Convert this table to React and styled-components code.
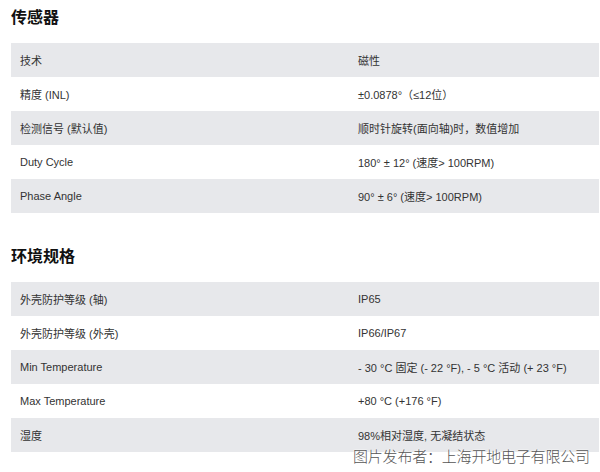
import React from 'react';
import styled, { createGlobalStyle } from 'styled-components';

const Global = createGlobalStyle`
  body {
    margin: 0;
    background: #fff;
    font-family: "Liberation Sans", Arial, "Noto Sans CJK SC", sans-serif;
  }
`;

const Page = styled.div`
  position: relative;
  width: 600px;
  height: 472px;
  overflow: hidden;
  padding: 0 1px 0 11px;
  box-sizing: border-box;
`;

const Section = styled.section`
  padding-top: ${p => (p.first ? '4px' : '30px')};
`;

const Heading = styled.h2`
  margin: 0;
  font-family: "Noto Sans CJK SC", sans-serif;
  font-size: 16px;
  line-height: 24px;
  font-weight: 700;
  color: #111;
`;

const Table = styled.div`
  margin-top: 15px;
  display: grid;
  grid-template-columns: 338px 1fr;
`;

const Cell = styled.div`
  height: 34px;
  display: flex;
  align-items: center;
  padding-left: 9px;
  font-size: 11px;
  color: #333;
  background: ${p => (p.shaded ? '#e7e8eb' : '#fff')};
  white-space: nowrap;
`;

const Watermark = styled.div`
  position: absolute;
  left: 353px;
  top: 446px;
  font-family: "Noto Sans CJK SC", sans-serif;
  font-weight: 300;
  font-size: 15px;
  line-height: 20px;
  letter-spacing: -0.2px;
  color: #555;
  text-shadow: 0 0 2px #fff, 0 0 2px #fff;
`;

const sensor = [
  ['技术', '磁性'],
  ['精度 (INL)', '±0.0878°（≤12位）'],
  ['检测信号 (默认值)', '顺时针旋转(面向轴)时，数值增加'],
  ['Duty Cycle', '180° ± 12° (速度> 100RPM)'],
  ['Phase Angle', '90° ± 6° (速度> 100RPM)'],
];

const env = [
  ['外壳防护等级 (轴)', 'IP65'],
  ['外壳防护等级 (外壳)', 'IP66/IP67'],
  ['Min Temperature', '- 30 °C 固定 (- 22 °F), - 5 °C 活动 (+ 23 °F)'],
  ['Max Temperature', '+80 °C (+176 °F)'],
  ['湿度', '98%相对湿度, 无凝结状态'],
];

const SpecTable = ({ rows }) => (
  <Table>
    {rows.map(([k, v], i) => (
      <React.Fragment key={k}>
        <Cell shaded={i % 2 === 0}>{k}</Cell>
        <Cell shaded={i % 2 === 0}>{v}</Cell>
      </React.Fragment>
    ))}
  </Table>
);

export default function App() {
  return (
    <Page>
      <Global />
      <Section first>
        <Heading>传感器</Heading>
        <SpecTable rows={sensor} />
      </Section>
      <Section>
        <Heading>环境规格</Heading>
        <SpecTable rows={env} />
      </Section>
      <Watermark>图片发布者：上海开地电子有限公司</Watermark>
    </Page>
  );
}
